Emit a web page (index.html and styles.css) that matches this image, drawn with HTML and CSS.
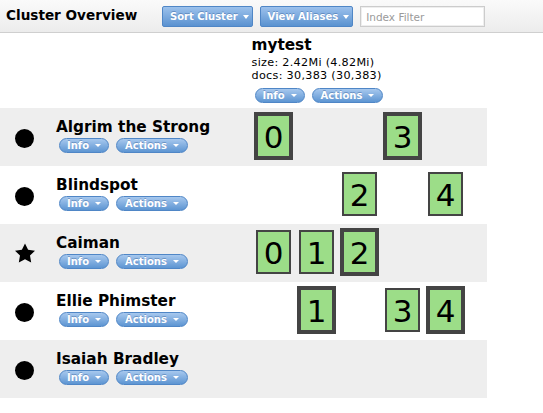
FILE: index.html
```html
<!DOCTYPE html>
<html>
<head>
<meta charset="utf-8">
<link rel="stylesheet" href="styles.css">
</head>
<body>
<div class="header">
  <h1 class="title">Cluster Overview</h1>
  <div class="tools">
    <button class="btn btn-lg">Sort Cluster<span class="caret"></span></button>
    <button class="btn btn-lg">View Aliases<span class="caret"></span></button>
    <input class="filter" type="text" placeholder="Index Filter">
  </div>
</div>
<div class="overview">
  <div class="row head">
    <div class="index-head">
      <div class="index-name">mytest</div>
      <div class="index-stat first">size: 2.42Mi (4.82Mi)</div>
      <div class="index-stat">docs: 30,383 (30,383)</div>
      <div class="btns"><button class="btn btn-sm">Info<span class="caret"></span></button><button class="btn btn-sm btn-act">Actions<span class="caret"></span></button></div>
    </div>
  </div>

  <div class="row node alt">
    <div class="icon"><span class="dot"></span></div>
    <div class="name-cell">
      <div class="name">Algrim the Strong</div>
      <div class="btns"><button class="btn btn-sm">Info<span class="caret"></span></button><button class="btn btn-sm btn-act">Actions<span class="caret"></span></button></div>
    </div>
    <div class="scell"><div class="shard primary">0</div></div>
    <div class="scell"></div>
    <div class="scell"></div>
    <div class="scell"><div class="shard primary">3</div></div>
    <div class="scell"></div>
  </div>

  <div class="row node">
    <div class="icon"><span class="dot"></span></div>
    <div class="name-cell">
      <div class="name">Blindspot</div>
      <div class="btns"><button class="btn btn-sm">Info<span class="caret"></span></button><button class="btn btn-sm btn-act">Actions<span class="caret"></span></button></div>
    </div>
    <div class="scell"></div>
    <div class="scell"></div>
    <div class="scell"><div class="shard replica">2</div></div>
    <div class="scell"></div>
    <div class="scell"><div class="shard replica">4</div></div>
  </div>

  <div class="row node alt">
    <div class="icon"><svg class="star" width="22" height="21" viewBox="0 0 22 21"><polygon points="11,0.5 14.1,6.7 21,7.8 16,12.6 17.2,19.5 11,16.3 4.8,19.5 6,12.6 1,7.8 7.9,6.7" fill="#000"/></svg></div>
    <div class="name-cell">
      <div class="name">Caiman</div>
      <div class="btns"><button class="btn btn-sm">Info<span class="caret"></span></button><button class="btn btn-sm btn-act">Actions<span class="caret"></span></button></div>
    </div>
    <div class="scell"><div class="shard replica">0</div></div>
    <div class="scell"><div class="shard replica">1</div></div>
    <div class="scell"><div class="shard primary">2</div></div>
    <div class="scell"></div>
    <div class="scell"></div>
  </div>

  <div class="row node">
    <div class="icon"><span class="dot"></span></div>
    <div class="name-cell">
      <div class="name">Ellie Phimster</div>
      <div class="btns"><button class="btn btn-sm">Info<span class="caret"></span></button><button class="btn btn-sm btn-act">Actions<span class="caret"></span></button></div>
    </div>
    <div class="scell"></div>
    <div class="scell"><div class="shard primary">1</div></div>
    <div class="scell"></div>
    <div class="scell"><div class="shard replica">3</div></div>
    <div class="scell"><div class="shard primary">4</div></div>
  </div>

  <div class="row node alt">
    <div class="icon"><span class="dot"></span></div>
    <div class="name-cell">
      <div class="name">Isaiah Bradley</div>
      <div class="btns"><button class="btn btn-sm">Info<span class="caret"></span></button><button class="btn btn-sm btn-act">Actions<span class="caret"></span></button></div>
    </div>
    <div class="scell"></div>
    <div class="scell"></div>
    <div class="scell"></div>
    <div class="scell"></div>
    <div class="scell"></div>
  </div>
</div>
</body>
</html>
```
FILE: styles.css
```css
* { box-sizing: border-box; }
body {
  margin: 0;
  background: #fff;
  font-family: "DejaVu Sans", Verdana, sans-serif;
  color: #000;
}
.header {
  display: flex;
  align-items: flex-start;
  height: 33px;
  padding: 6px 0 0 6px;
  background: linear-gradient(#fafafa, #ececec);
  border-bottom: 1px solid #cfcfcf;
}
.title {
  flex: 0 0 156px;
  margin: 1px 0 0 0;
  font-size: 13.6px;
  line-height: 16px;
  font-weight: bold;
}
.tools {
  display: flex;
  align-items: flex-start;
}
.btn {
  display: inline-flex;
  align-items: center;
  margin: 0;
  border: 1px solid #4f86c6;
  background: linear-gradient(#a7c8ee, #5d95d2);
  color: #fff;
  font-family: "DejaVu Sans", Verdana, sans-serif;
  font-weight: bold;
  font-size: 10px;
  text-shadow: 0 -1px 0 rgba(30, 70, 130, 0.35);
  white-space: nowrap;
}
.btn-lg {
  height: 21px;
  padding: 0 3px 0 7px;
  border-radius: 2px;
  margin-right: 7px;
  background: linear-gradient(#9cc1ec, #5a92d0);
}
.btn-lg .caret {
  margin-left: 5px;
  border-left: 3.5px solid transparent;
  border-right: 3.5px solid transparent;
  border-top: 4px solid #fff;
}
.btn-sm {
  height: 15px;
  padding: 0 7px 0 7px;
  border-radius: 8px;
  margin-left: 3px;
  margin-right: 4px;
}
.btn-act { padding-right: 8px; padding-left: 8px; }
.btn-sm .caret {
  margin-left: 6px;
  border-left: 3px solid transparent;
  border-right: 3px solid transparent;
  border-top: 3px solid #fff;
}
.filter {
  margin: 0;
  width: 125px;
  height: 21px;
  border: 1px solid #cccccc;
  box-shadow: inset 0 0 0 1px #eeeeee;
  background: #fff;
  padding: 0 0 0 5px;
  font-family: "DejaVu Sans", Verdana, sans-serif;
  font-size: 10.5px;
  outline: none;
}
.filter::placeholder { color: #9a9a9a; }

.overview { width: 487px; }
.row {
  display: grid;
  grid-template-columns: 49px 205px repeat(5, 43px);
  width: 487px;
}
.head { height: 75px; }
.index-head {
  grid-column: 3 / span 5;
  margin-left: -2.5px;
  padding-top: 3.3px;
}
.index-name {
  font-size: 15.3px;
  font-weight: bold;
  line-height: 18px;
}
.index-stat {
  font-size: 11.2px;
  letter-spacing: 0.3px;
  line-height: 13px;
  white-space: nowrap;
}
.index-stat.first { margin-top: 2px; }
.btns { display: flex; }
.index-head .btns { margin-top: 5.3px; }

.node { height: 58px; }
.alt { background: #eeeeee; }
.icon {
  display: flex;
  align-items: center;
  justify-content: center;
  padding-top: 2px;
}
.dot {
  width: 19px;
  height: 19px;
  border-radius: 50%;
  background: #000;
}
.star { display: block; margin-top: -2px; }
.name-cell {
  padding: 9.6px 0 0 7px;
}
.name {
  font-size: 15.3px;
  font-weight: bold;
  line-height: 18px;
  white-space: nowrap;
}
.name-cell .btns { margin-top: 2.7px; }

.scell { padding-top: 4px; }
.shard {
  background: #9cdd88;
  border-style: solid;
  border-color: #444;
  text-align: center;
  font-size: 31px;
  line-height: 42px;
  overflow: hidden;
}
.primary {
  width: 39px;
  height: 48px;
  border-width: 4px;
}
.replica {
  width: 35px;
  height: 44px;
  margin: 2px;
  border-width: 2px;
}
```
